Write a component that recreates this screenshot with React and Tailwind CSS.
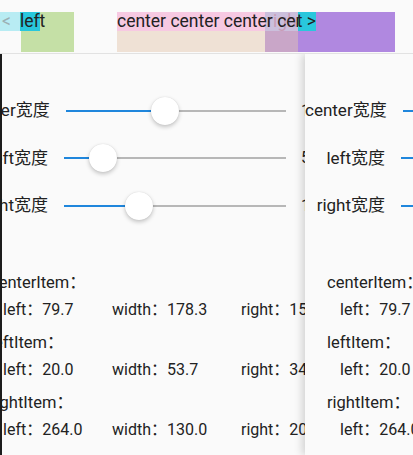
import React from "react";

const font = { fontFamily: 'Roboto, "Noto Sans CJK SC", sans-serif' };

const sliders = [
  { label: "center宽度", value: "178.3", frac: 0.45 },
  { label: "left宽度", value: "53.7", frac: 0.176 },
  { label: "right宽度", value: "130.0", frac: 0.338 },
];

const items = [
  { name: "centerItem", left: "79.7", width: "178.3", right: "156.0" },
  { name: "leftItem", left: "20.0", width: "53.7", right: "340.3" },
  { name: "rightItem", left: "264.0", width: "130.0", right: "20.0" },
];

const Slider = ({ frac }) => (
  <div className="relative flex-1 h-[28px]">
    <div className="absolute left-0 right-0 top-[13px] h-[2px] bg-[#b7b7b7]" />
    <div
      className="absolute left-0 top-[13px] h-[2px] bg-[#1f86dc]"
      style={{ width: `${frac * 100}%` }}
    />
    <div
      className="absolute top-0 w-[28px] h-[28px] -ml-[14px] rounded-full bg-white shadow-[0_2px_4px_rgba(0,0,0,0.22),0_0_1px_rgba(0,0,0,0.15)]"
      style={{ left: `${frac * 100}%` }}
    />
  </div>
);

const Page = () => (
  <div className="w-[413px] h-full bg-[#fafafa] text-[#222]" style={font}>
    <div className="pt-[33px]">
      {sliders.map((s) => (
        <div key={s.label} className="flex items-center h-[47.5px]">
          <div className="min-w-[80px] text-right text-[17px] whitespace-nowrap">{s.label}</div>
          <div className="ml-[16px] flex-1 flex">
            <Slider frac={s.frac} />
          </div>
          <div className="ml-[15px] w-[65px] mr-[15px] text-[16px]">{s.value}</div>
        </div>
      ))}
    </div>
    <div className="mt-[39px] px-[22px]">
      {items.map((it) => (
        <div key={it.name} className="mb-[5px]">
          <div className="h-[27px] leading-[27px] text-[16.5px]">{it.name}：</div>
          <div className="flex h-[28px] leading-[28px] pl-[13px] text-[16px] whitespace-nowrap">
            <div className="w-[109px]">left：{it.left}</div>
            <div className="w-[129px]">width：{it.width}</div>
            <div>right：{it.right}</div>
          </div>
        </div>
      ))}
    </div>
  </div>
);

const NavBar = () => (
  <div className="relative h-[54px] bg-[#fafafa] border-b border-[#e2e2e2] text-[17.5px] text-[#222] overflow-hidden" style={font}>
    <div className="absolute left-0 top-[12px] flex items-start">
      <div className="w-[21px] h-[19px] bg-[#b8ecf3] leading-[19px] pl-[2px] text-[#9bb0b4]">&lt;</div>
      <div className="w-[53px] h-[40px] bg-[#c5e0a6]">
        <div className="w-[20px] h-[19px] bg-[#29c7dc] leading-[19px] -ml-[1px] whitespace-nowrap">left</div>
      </div>
    </div>
    <div className="absolute left-[265px] top-[12px] w-[130px] h-[40px] bg-[#b088e0]">
      <div className="w-[51px] h-[19px] leading-[19px] bg-[#29c7dc] text-right whitespace-nowrap">right &gt;</div>
    </div>
    <div className="absolute left-[117px] top-[12px] w-[181px] h-[40px] bg-[rgba(228,199,174,0.48)] overflow-hidden">
      <div className="h-[19px] leading-[19px] bg-[rgba(252,185,235,0.6)] whitespace-nowrap">center center center center</div>
    </div>
  </div>
);

export default function App() {
  return (
    <div className="w-[413px] h-[455px] flex flex-col bg-[#fafafa] overflow-hidden">
      <NavBar />
      <div className="relative flex-1 overflow-hidden">
        <div className="absolute top-0 bottom-0 left-[-32px]">
          <Page />
        </div>
        <div className="absolute top-0 bottom-0 left-[305px] shadow-[-3px_0_8px_rgba(0,0,0,0.16)]">
          <Page />
        </div>
        <div className="absolute left-0 top-0 bottom-0 w-[2px] bg-[#1c1c1c]" />
      </div>
    </div>
  );
}
